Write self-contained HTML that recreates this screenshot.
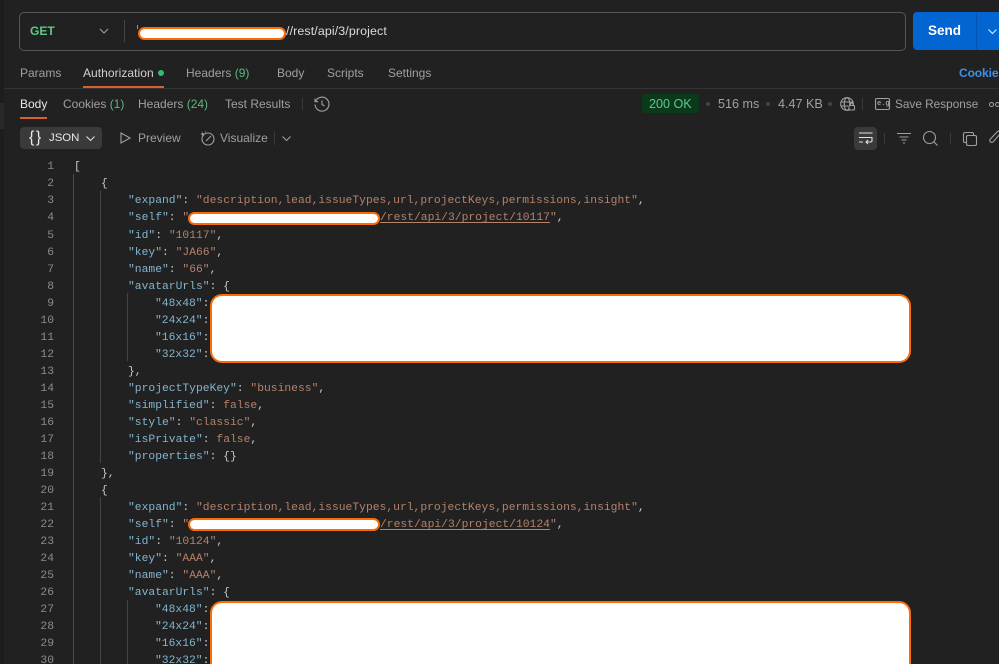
<!DOCTYPE html>
<html><head><meta charset="utf-8">
<style>
html,body{margin:0;padding:0;background:#212121;}
#p{position:relative;width:999px;height:664px;overflow:hidden;background:#212121;font-family:"Liberation Sans",sans-serif;font-size:12px;letter-spacing:0;color:#a0a0a0;}
.a{position:absolute;white-space:pre;line-height:16px;}
.g{color:#5cb97e;}
.w{color:#e8e8e8;}
.l{position:absolute;left:0;width:54px;text-align:right;font:11.33px/17px "Liberation Mono",monospace;letter-spacing:0;color:#8c8c8c;}
.c{position:absolute;white-space:pre;font:11.33px/17px "Liberation Mono",monospace;letter-spacing:0;color:#c8c8c8;}
.k{color:#83b5cf;}
.s{color:#b5826a;}
.b{color:#b5826a;}
.u{text-decoration:underline;text-underline-offset:2px;}
.r{position:absolute;background:#fff;border:2px solid #fb6c08;box-sizing:border-box;}
.v{position:absolute;width:1px;background:#444;}
svg{position:absolute;fill:none;stroke:#a0a0a0;stroke-width:1.1;overflow:visible;}
</style></head><body><div id="p">
<div style="position:absolute;left:0;top:0;width:4px;height:664px;background:#1d1d1d"></div>
<div style="position:absolute;left:0;top:103px;width:4px;height:26px;background:#282828"></div>

<div style="position:absolute;left:19px;top:12px;width:887px;height:39px;box-sizing:border-box;border:1px solid #565656;border-radius:5px;"></div>
<div class="a" style="left:30px;top:23px;color:#5cc98a;font-weight:bold;font-size:12px;letter-spacing:0">GET</div>
<svg style="left:99px;top:28px" width="10" height="6"><path d="M1 1l4 4 4-4"/></svg>
<div style="position:absolute;left:124px;top:20px;width:1px;height:22px;background:#444"></div>
<div style="position:absolute;left:137px;top:25px;width:1px;height:4px;background:#999"></div>
<div class="a" style="left:286px;top:23px;color:#dcdcdc;font-size:12.4px;letter-spacing:.12px">//rest/api/3/project</div>
<div class="r" style="left:138px;top:27px;width:148px;height:13px;border-radius:7px"></div>

<div style="position:absolute;left:913px;top:12px;width:86px;height:38px;background:#0265d2;border-radius:4px 0 0 4px"></div>
<div style="position:absolute;left:976px;top:12px;width:1px;height:38px;background:#0255b0"></div>
<div class="a" style="left:928px;top:23px;color:#fff;font-weight:bold;font-size:13.5px;letter-spacing:0">Send</div>
<svg style="left:988px;top:29px" width="9" height="6"><path d="M.5 .5l4 4 4-4" style="stroke:#e8f0fa"/></svg>

<div class="a" style="left:20px;top:65px">Params</div>
<div class="a" style="left:83px;top:65px;color:#d0d0d0;letter-spacing:.05px">Authorization</div>
<div style="position:absolute;left:158px;top:70px;width:6px;height:6px;border-radius:50%;background:#2fbf71"></div>
<div class="a" style="left:186px;top:65px">Headers <span class="g">(9)</span></div>
<div class="a" style="left:277px;top:65px">Body</div>
<div class="a" style="left:327px;top:65px">Scripts</div>
<div class="a" style="left:388px;top:65px">Settings</div>
<div class="a" style="left:959px;top:65px;color:#3f8fe8;font-weight:bold;font-size:12px;letter-spacing:-.1px">Cookies</div>
<div style="position:absolute;left:83px;top:86px;width:81px;height:2px;background:#d9622b"></div>
<div style="position:absolute;left:4px;top:88px;width:995px;height:1px;background:#333"></div>

<div class="a w" style="left:20px;top:96px">Body</div>
<div style="position:absolute;left:20px;top:117px;width:27px;height:2px;background:#d9622b"></div>
<div class="a" style="left:63px;top:96px">Cookies <span class="g">(1)</span></div>
<div class="a" style="left:138px;top:96px">Headers <span class="g">(24)</span></div>
<div class="a" style="left:225px;top:96px">Test Results</div>
<div style="position:absolute;left:302px;top:98px;width:1px;height:12px;background:#3a3a3a"></div>
<svg style="left:314px;top:96px" width="16" height="16" viewBox="0 0 16 16"><path d="M1.500 5.500A7 7 0 1 1 1 8.500M1 2.500v3.200h3.200M8 4.500v4l2.500 1.500"/></svg>

<div style="position:absolute;left:642px;top:94px;width:57px;height:19px;background:#0b3a1b;border-radius:3px"></div>
<div class="a" style="left:649px;top:96px;color:#5cc98a;font-size:12.6px;letter-spacing:0">200 OK</div>
<div style="position:absolute;left:706px;top:102px;width:4px;height:4px;border-radius:50%;background:#444"></div>
<div class="a" style="left:718px;top:96px;font-size:12.6px;letter-spacing:0">516 ms</div>
<div style="position:absolute;left:766px;top:102px;width:4px;height:4px;border-radius:50%;background:#444"></div>
<div class="a" style="left:778px;top:96px;font-size:12.6px;letter-spacing:0">4.47 KB</div>
<div style="position:absolute;left:828px;top:102px;width:4px;height:4px;border-radius:50%;background:#444"></div>
<svg style="left:840px;top:97px" width="15" height="14" viewBox="0 0 15 14"><circle cx="7" cy="7" r="6.300"/><ellipse cx="7" cy="7" rx="2.800" ry="6.300"/><path d="M1 5h12M1 9h7"/><rect x="9" y="8.500" width="5.500" height="4.500" rx="1" style="fill:#212121"/><path d="M10.300 8.500v-1a1.400 1.400 0 0 1 2.800 0v1"/></svg>
<div style="position:absolute;left:862px;top:98px;width:1px;height:12px;background:#3a3a3a"></div>
<svg style="left:875px;top:98px" width="15" height="12" viewBox="0 0 15 12"><rect x=".5" y=".5" width="14" height="11" rx="1.500"/></svg>
<div class="a" style="left:877px;top:96px;font:bold 7px/16px 'Liberation Mono',monospace;letter-spacing:0">e.g</div>
<div class="a" style="left:895px;top:96px;font-size:11.8px;letter-spacing:0">Save Response</div>
<div style="position:absolute;left:989px;top:102px;width:5px;height:5px;box-sizing:border-box;border:1px solid #a0a0a0;border-radius:50%"></div>
<div style="position:absolute;left:995px;top:102px;width:5px;height:5px;box-sizing:border-box;border:1px solid #a0a0a0;border-radius:50%"></div>

<div style="position:absolute;left:20px;top:127px;width:82px;height:22px;background:#3a3a3a;border-radius:4px"></div>
<div class="a w" style="left:29px;top:129px;font:16px/18px 'Liberation Sans',sans-serif;letter-spacing:1.5px">{}</div>
<div class="a w" style="left:49px;top:130px;font-size:11.4px;letter-spacing:0">JSON</div>
<svg style="left:86px;top:136px" width="9" height="6"><path d="M.5 .5l4 4 4-4" style="stroke:#e0e0e0"/></svg>
<svg style="left:120px;top:132px" width="11" height="12" viewBox="0 0 11 12"><path d="M1 1l9 5-9 5z"/></svg>
<div class="a" style="left:138px;top:130px">Preview</div>
<svg style="left:200px;top:131px" width="15" height="15" viewBox="0 0 15 15"><circle cx="8" cy="8" r="6"/><path d="M6 10l5-5M1 3h3M2.500 1.500v3M5 1h1"/></svg>
<div class="a" style="left:220px;top:130px">Visualize</div>
<div style="position:absolute;left:274px;top:131px;width:1px;height:14px;background:#3a3a3a"></div>
<svg style="left:282px;top:136px" width="9" height="6"><path d="M.5 .5l4 4 4-4"/></svg>

<div style="position:absolute;left:854px;top:127px;width:23px;height:23px;background:#3a3a3a;border-radius:4px"></div>
<svg style="left:859px;top:132px" width="14" height="13" viewBox="0 0 14 13"><path d="M0 1h13.500M0 5.500h13.500M0 10h4M13 5.500v3a1.500 1.500 0 0 1-1.500 1.500H7M9 8l-2 2 2 2" style="stroke:#e0e0e0"/></svg>
<div style="position:absolute;left:884px;top:133px;width:1px;height:11px;background:#3a3a3a"></div>
<svg style="left:897px;top:133px" width="14" height="11" viewBox="0 0 14 11"><path d="M0 .5h14M2.500 4h9M4.500 7h5M6 10h2"/></svg>
<svg style="left:923px;top:131px" width="15" height="15" viewBox="0 0 15 15"><circle cx="6.500" cy="6.500" r="6"/><path d="M11 11l3.500 3.500"/></svg>
<div style="position:absolute;left:950px;top:133px;width:1px;height:11px;background:#3a3a3a"></div>
<svg style="left:963px;top:132px" width="14" height="14" viewBox="0 0 14 14"><rect x="3.500" y="3.500" width="10" height="10" rx="1.500"/><path d="M3.500 10.500H2A1.500 1.500 0 0 1 .5 9V2A1.500 1.500 0 0 1 2 .5h7A1.500 1.500 0 0 1 10.500 2v1.500"/></svg>
<svg style="left:989px;top:131px" width="12" height="15" viewBox="0 0 12 15"><path d="M11 3l-7 8a2 2 0 0 1-3-2.500L8 1a3 3 0 0 1 5 3"/></svg>

<div class="v" style="left:73px;top:174px;height:490px;background:#4a4a4a"></div>
<div class="v" style="left:100px;top:191px;height:272px"></div>
<div class="v" style="left:100px;top:497px;height:167px"></div>
<div class="v" style="left:127px;top:293px;height:68px"></div>
<div class="v" style="left:127px;top:600px;height:64px"></div>

<div style="position:absolute;left:0;top:2px;width:999px;height:662px">
<div class="l" style="top:157px">1</div><div class="c" style="left:74px;top:157px">[</div>
<div class="l" style="top:174px">2</div><div class="c" style="left:101px;top:174px">{</div>
<div class="l" style="top:191px">3</div><div class="c" style="left:128px;top:191px"><span class="k">"expand"</span>: <span class="s">"description,lead,issueTypes,url,projectKeys,permissions,insight"</span>,</div>
<div class="l" style="top:208px">4</div><div class="c" style="left:128px;top:208px"><span class="k">"self"</span>: <span class="s">"</span></div><div class="c" style="left:380px;top:208px"><span class="s u">/rest/api/3/project/10117</span><span class="s">"</span>,</div>
<div class="l" style="top:226px">5</div><div class="c" style="left:128px;top:226px"><span class="k">"id"</span>: <span class="s">"10117"</span>,</div>
<div class="l" style="top:243px">6</div><div class="c" style="left:128px;top:243px"><span class="k">"key"</span>: <span class="s">"JA66"</span>,</div>
<div class="l" style="top:260px">7</div><div class="c" style="left:128px;top:260px"><span class="k">"name"</span>: <span class="s">"66"</span>,</div>
<div class="l" style="top:277px">8</div><div class="c" style="left:128px;top:277px"><span class="k">"avatarUrls"</span>: {</div>
<div class="l" style="top:294px">9</div><div class="c" style="left:155px;top:294px"><span class="k">"48x48"</span>:</div>
<div class="l" style="top:311px">10</div><div class="c" style="left:155px;top:311px"><span class="k">"24x24"</span>:</div>
<div class="l" style="top:328px">11</div><div class="c" style="left:155px;top:328px"><span class="k">"16x16"</span>:</div>
<div class="l" style="top:345px">12</div><div class="c" style="left:155px;top:345px"><span class="k">"32x32"</span>:</div>
<div class="l" style="top:362px">13</div><div class="c" style="left:128px;top:362px">},</div>
<div class="l" style="top:379px">14</div><div class="c" style="left:128px;top:379px"><span class="k">"projectTypeKey"</span>: <span class="s">"business"</span>,</div>
<div class="l" style="top:396px">15</div><div class="c" style="left:128px;top:396px"><span class="k">"simplified"</span>: <span class="b">false</span>,</div>
<div class="l" style="top:413px">16</div><div class="c" style="left:128px;top:413px"><span class="k">"style"</span>: <span class="s">"classic"</span>,</div>
<div class="l" style="top:430px">17</div><div class="c" style="left:128px;top:430px"><span class="k">"isPrivate"</span>: <span class="b">false</span>,</div>
<div class="l" style="top:447px">18</div><div class="c" style="left:128px;top:447px"><span class="k">"properties"</span>: {}</div>
<div class="l" style="top:464px">19</div><div class="c" style="left:101px;top:464px">},</div>
<div class="l" style="top:481px">20</div><div class="c" style="left:101px;top:481px">{</div>
<div class="l" style="top:498px">21</div><div class="c" style="left:128px;top:498px"><span class="k">"expand"</span>: <span class="s">"description,lead,issueTypes,url,projectKeys,permissions,insight"</span>,</div>
<div class="l" style="top:515px">22</div><div class="c" style="left:128px;top:515px"><span class="k">"self"</span>: <span class="s">"</span></div><div class="c" style="left:380px;top:515px"><span class="s u">/rest/api/3/project/10124</span><span class="s">"</span>,</div>
<div class="l" style="top:532px">23</div><div class="c" style="left:128px;top:532px"><span class="k">"id"</span>: <span class="s">"10124"</span>,</div>
<div class="l" style="top:549px">24</div><div class="c" style="left:128px;top:549px"><span class="k">"key"</span>: <span class="s">"AAA"</span>,</div>
<div class="l" style="top:566px">25</div><div class="c" style="left:128px;top:566px"><span class="k">"name"</span>: <span class="s">"AAA"</span>,</div>
<div class="l" style="top:583px">26</div><div class="c" style="left:128px;top:583px"><span class="k">"avatarUrls"</span>: {</div>
<div class="l" style="top:600px">27</div><div class="c" style="left:155px;top:600px"><span class="k">"48x48"</span>:</div>
<div class="l" style="top:617px">28</div><div class="c" style="left:155px;top:617px"><span class="k">"24x24"</span>:</div>
<div class="l" style="top:634px">29</div><div class="c" style="left:155px;top:634px"><span class="k">"16x16"</span>:</div>
<div class="l" style="top:651px">30</div><div class="c" style="left:155px;top:651px"><span class="k">"32x32"</span>:</div>
</div>

<div class="r" style="left:188px;top:212px;width:192px;height:13px;border-radius:7px"></div>
<div class="r" style="left:188px;top:518px;width:192px;height:13px;border-radius:7px"></div>
<div class="r" style="left:210px;top:294px;width:701px;height:69px;border-radius:12px"></div>
<div class="r" style="left:210px;top:601px;width:701px;height:80px;border-radius:12px"></div>
</div></body></html>
